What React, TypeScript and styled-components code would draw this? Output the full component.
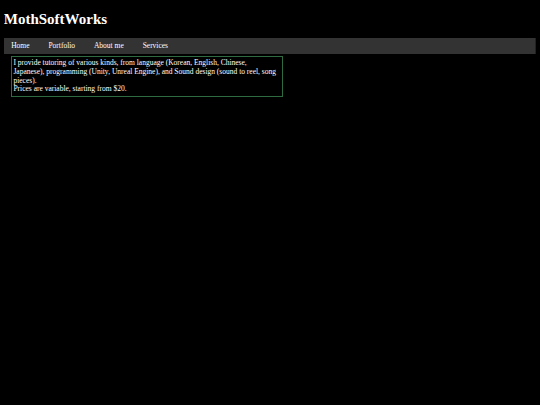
import React from "react";
import styled, { createGlobalStyle } from "styled-components";

const GlobalStyle = createGlobalStyle`
  html, body {
    background: #000;
  }
  body {
    margin: 0 3.75px 3.75px;
    color: #fff;
    font-family: "Liberation Serif", "Times New Roman", serif;
    font-size: 7.5px;
  }
`;

const Title = styled.h1`
  font-size: 15px;
  font-weight: bold;
  margin: 10.5px 0 10.5px;
  line-height: 17.2px;
`;

const NavBar = styled.nav`
  background: #333;
  border-right: 1px solid #222;
`;

const NavList = styled.ul`
  list-style: none;
  margin: 0;
  padding: 0;
  display: flex;
  gap: 4px;
`;

const NavItem = styled.li`
  padding: 3.7px 7.45px;
  line-height: 8.6px;
  color: #fff;
`;

const InfoBox = styled.div`
  margin: 1.8px 0 0 7.5px;
  width: 266px;
  padding: 2.4px 2.5px 2.4px 1.2px;
  border: 1px solid #2f6b40;
  line-height: 8.6px;
`;

export default function App() {
  const items = ["Home", "Portfolio", "About me", "Services"];
  return (
    <>
      <GlobalStyle />
      <Title>MothSoftWorks</Title>
      <NavBar>
        <NavList>
          {items.map((it) => (
            <NavItem key={it}>{it}</NavItem>
          ))}
        </NavList>
      </NavBar>
      <InfoBox>
        I provide tutoring of various kinds, from language (Korean, English, Chinese, Japanese), programming (Unity, Unreal Engine), and Sound design (sound to reel, song pieces).
        <br />
        Prices are variable, starting from $20.
      </InfoBox>
    </>
  );
}
